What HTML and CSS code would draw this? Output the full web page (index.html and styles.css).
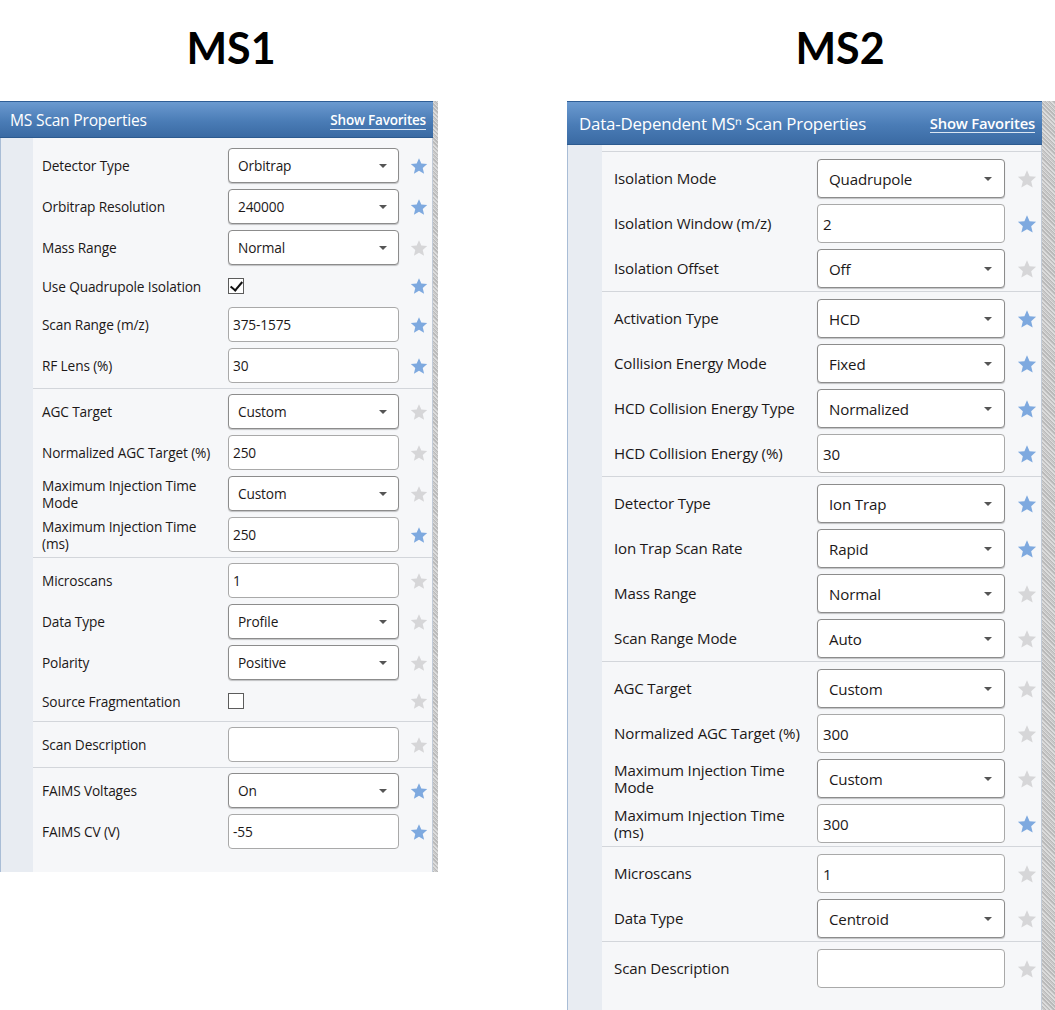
FILE: index.html
```html
<!DOCTYPE html>
<html>
<head>
<meta charset="utf-8">
<title>MS1 / MS2 Scan Properties</title>
<link rel="stylesheet" href="styles.css">
</head>
<body>
<svg class="defs" width="0" height="0" aria-hidden="true">
  <symbol id="star" viewBox="0 0 24 24"><path d="M12 1.5l3.1 7.2 7.8.7-5.9 5.2 1.8 7.7L12 18.2 5.2 22.3 7 14.6 1.1 9.4l7.8-.7z"/></symbol>
</svg>
<div class="page">
  <section class="col col--ms1">
    <h1 class="title">MS1</h1>
    <div class="panel">
      <div class="panel-main">
        <div class="panel-head"><span class="panel-title">MS Scan Properties</span><span class="fav-link">Show Favorites</span></div>
        <div class="panel-body">
          <div class="group group--first">
            <div class="row"><span class="label">Detector Type</span><div class="ctl select"><span class="val">Orbitrap</span><i class="caret"></i></div><svg class="star on"><use href="#star"/></svg></div>
            <div class="row"><span class="label">Orbitrap Resolution</span><div class="ctl select"><span class="val">240000</span><i class="caret"></i></div><svg class="star on"><use href="#star"/></svg></div>
            <div class="row"><span class="label">Mass Range</span><div class="ctl select"><span class="val">Normal</span><i class="caret"></i></div><svg class="star"><use href="#star"/></svg></div>
            <div class="row row--check"><span class="label">Use Quadrupole Isolation</span><div class="check-cell"><span class="checkbox checked"></span></div><svg class="star on"><use href="#star"/></svg></div>
            <div class="row"><span class="label">Scan Range (m/z)</span><div class="ctl input"><span class="val">375-1575</span></div><svg class="star on"><use href="#star"/></svg></div>
            <div class="row"><span class="label">RF Lens (%)</span><div class="ctl input"><span class="val">30</span></div><svg class="star on"><use href="#star"/></svg></div>
          </div>
          <div class="group">
            <div class="row"><span class="label">AGC Target</span><div class="ctl select"><span class="val">Custom</span><i class="caret"></i></div><svg class="star"><use href="#star"/></svg></div>
            <div class="row"><span class="label">Normalized AGC Target (%)</span><div class="ctl input"><span class="val">250</span></div><svg class="star"><use href="#star"/></svg></div>
            <div class="row"><span class="label">Maximum Injection Time Mode</span><div class="ctl select"><span class="val">Custom</span><i class="caret"></i></div><svg class="star"><use href="#star"/></svg></div>
            <div class="row"><span class="label">Maximum Injection Time (ms)</span><div class="ctl input"><span class="val">250</span></div><svg class="star on"><use href="#star"/></svg></div>
          </div>
          <div class="group">
            <div class="row"><span class="label">Microscans</span><div class="ctl input"><span class="val">1</span></div><svg class="star"><use href="#star"/></svg></div>
            <div class="row"><span class="label">Data Type</span><div class="ctl select"><span class="val">Profile</span><i class="caret"></i></div><svg class="star"><use href="#star"/></svg></div>
            <div class="row"><span class="label">Polarity</span><div class="ctl select"><span class="val">Positive</span><i class="caret"></i></div><svg class="star"><use href="#star"/></svg></div>
            <div class="row row--check"><span class="label">Source Fragmentation</span><div class="check-cell"><span class="checkbox"></span></div><svg class="star"><use href="#star"/></svg></div>
          </div>
          <div class="group">
            <div class="row"><span class="label">Scan Description</span><div class="ctl input"><span class="val"></span></div><svg class="star"><use href="#star"/></svg></div>
          </div>
          <div class="group group--last">
            <div class="row"><span class="label">FAIMS Voltages</span><div class="ctl select"><span class="val">On</span><i class="caret"></i></div><svg class="star on"><use href="#star"/></svg></div>
            <div class="row"><span class="label">FAIMS CV (V)</span><div class="ctl input"><span class="val">-55</span></div><svg class="star on"><use href="#star"/></svg></div>
          </div>
        </div>
      </div>
      <div class="strip"></div>
    </div>
  </section>

  <section class="col col--ms2">
    <h1 class="title">MS2</h1>
    <div class="panel panel--lg">
      <div class="panel-main">
        <div class="panel-head"><span class="panel-title">Data-Dependent MSⁿ Scan Properties</span><span class="fav-link">Show Favorites</span></div>
        <div class="panel-body">
          <div class="group">
            <div class="row"><span class="label">Isolation Mode</span><div class="ctl select"><span class="val">Quadrupole</span><i class="caret"></i></div><svg class="star"><use href="#star"/></svg></div>
            <div class="row"><span class="label">Isolation Window (m/z)</span><div class="ctl input"><span class="val">2</span></div><svg class="star on"><use href="#star"/></svg></div>
            <div class="row"><span class="label">Isolation Offset</span><div class="ctl select"><span class="val">Off</span><i class="caret"></i></div><svg class="star"><use href="#star"/></svg></div>
          </div>
          <div class="group">
            <div class="row"><span class="label">Activation Type</span><div class="ctl select"><span class="val">HCD</span><i class="caret"></i></div><svg class="star on"><use href="#star"/></svg></div>
            <div class="row"><span class="label">Collision Energy Mode</span><div class="ctl select"><span class="val">Fixed</span><i class="caret"></i></div><svg class="star on"><use href="#star"/></svg></div>
            <div class="row"><span class="label">HCD Collision Energy Type</span><div class="ctl select"><span class="val">Normalized</span><i class="caret"></i></div><svg class="star on"><use href="#star"/></svg></div>
            <div class="row"><span class="label">HCD Collision Energy (%)</span><div class="ctl input"><span class="val">30</span></div><svg class="star on"><use href="#star"/></svg></div>
          </div>
          <div class="group">
            <div class="row"><span class="label">Detector Type</span><div class="ctl select"><span class="val">Ion Trap</span><i class="caret"></i></div><svg class="star on"><use href="#star"/></svg></div>
            <div class="row"><span class="label">Ion Trap Scan Rate</span><div class="ctl select"><span class="val">Rapid</span><i class="caret"></i></div><svg class="star on"><use href="#star"/></svg></div>
            <div class="row"><span class="label">Mass Range</span><div class="ctl select"><span class="val">Normal</span><i class="caret"></i></div><svg class="star"><use href="#star"/></svg></div>
            <div class="row"><span class="label">Scan Range Mode</span><div class="ctl select"><span class="val">Auto</span><i class="caret"></i></div><svg class="star"><use href="#star"/></svg></div>
          </div>
          <div class="group">
            <div class="row"><span class="label">AGC Target</span><div class="ctl select"><span class="val">Custom</span><i class="caret"></i></div><svg class="star"><use href="#star"/></svg></div>
            <div class="row"><span class="label">Normalized AGC Target (%)</span><div class="ctl input"><span class="val">300</span></div><svg class="star"><use href="#star"/></svg></div>
            <div class="row"><span class="label">Maximum Injection Time Mode</span><div class="ctl select"><span class="val">Custom</span><i class="caret"></i></div><svg class="star"><use href="#star"/></svg></div>
            <div class="row"><span class="label">Maximum Injection Time (ms)</span><div class="ctl input"><span class="val">300</span></div><svg class="star on"><use href="#star"/></svg></div>
          </div>
          <div class="group">
            <div class="row"><span class="label">Microscans</span><div class="ctl input"><span class="val">1</span></div><svg class="star"><use href="#star"/></svg></div>
            <div class="row"><span class="label">Data Type</span><div class="ctl select"><span class="val">Centroid</span><i class="caret"></i></div><svg class="star"><use href="#star"/></svg></div>
          </div>
          <div class="group">
            <div class="row"><span class="label">Scan Description</span><div class="ctl input"><span class="val"></span></div><svg class="star"><use href="#star"/></svg></div>
          </div>
        </div>
      </div>
      <div class="strip"></div>
    </div>
  </section>
</div>
</body>
</html>
```

FILE: styles.css
```css
html, body {
  margin: 0;
  padding: 0;
  background: #ffffff;
}
body {
  width: 1055px;
  height: 1010px;
  overflow: hidden;
  font-family: "Open Sans", "Noto Sans", "DejaVu Sans", sans-serif;
  color: #1c1818;
}
.defs {
  position: absolute;
  width: 0;
  height: 0;
}
.page {
  display: flex;
  align-items: flex-start;
}
.col {
  display: flex;
  flex-direction: column;
}
.col--ms1 {
  width: 438px;
}
.col--ms2 {
  width: 488px;
  margin-left: 129px;
}
.title {
  margin: 0;
  height: 101px;
  box-sizing: border-box;
  display: flex;
  align-items: center;
  justify-content: center;
  font-family: Lato, "Open Sans", sans-serif;
  font-weight: 700;
  font-size: 43px;
  color: #000;
  padding-bottom: 6px;
}
.col--ms1 .title {
  padding-left: 24px;
}
.col--ms2 .title {
  padding-left: 58px;
}

/* panel */
.panel {
  display: flex;
  align-items: stretch;
}
.panel-main {
  flex: 1;
  display: flex;
  flex-direction: column;
  min-width: 0;
}
.strip {
  width: 5px;
  background: repeating-linear-gradient(45deg, #b9b9b9 0 1px, #dcdcdc 1px 2px, #c8c8c8 2px 3px);
}
.panel--lg .strip {
  width: 13px;
}
.panel-head {
  height: 37px;
  box-sizing: border-box;
  display: flex;
  align-items: center;
  justify-content: space-between;
  padding: 0 7px 0 10px;
  background: linear-gradient(#6b9ad0, #4a7cb6 55%, #3a6aa3);
  border-top: 1px solid #2f5e96;
  border-bottom: 1px solid #2c5a8f;
  color: #fff;
}
.panel-title {
  font-size: 15.6px;
  letter-spacing: -0.2px;
}
.fav-link {
  font-size: 13.5px;
  font-weight: 600;
  letter-spacing: -0.2px;
  border-bottom: 1px solid #dbe6f3;
  line-height: 16px;
  padding-bottom: 1px;
  margin-top: 2px;
}
.panel-body {
  padding: 5px 0 18px 33px;
  background: linear-gradient(90deg, #a9bdd6 0 1px, #e8ecf2 1px 33px, #f6f7f9 33px);
  border-right: 1px solid #c3ccd8;
}
.group {
  padding: 2px 0;
  border-top: 1px solid #d3d6db;
}
.group--first {
  border-top: 0;
}
.row {
  display: flex;
  align-items: center;
  height: 41px;
  padding-left: 9px;
  font-size: 13.7px;
}
.row--check {
  height: 36px;
}
.label {
  width: 186px;
  flex: none;
  box-sizing: border-box;
  padding-right: 8px;
  line-height: 17px;
  letter-spacing: -0.15px;
}
.ctl {
  width: 171px;
  height: 35px;
  flex: none;
  box-sizing: border-box;
  display: flex;
  align-items: center;
  background: #fff;
  border: 1px solid #a9a9a9;
  border-radius: 4px;
  letter-spacing: -0.15px;
}
.input {
  padding-left: 4px;
}
.select {
  padding: 0 11px 0 9px;
  border-color: #8c8c8c;
  box-shadow: 0 1px 1px rgba(0, 0, 0, 0.22);
}
.val {
  flex: 1;
}
.caret {
  width: 0;
  height: 0;
  border-left: 4px solid transparent;
  border-right: 4px solid transparent;
  border-top: 4px solid #555;
}
.check-cell {
  width: 171px;
  flex: none;
  display: flex;
  align-items: center;
}
.checkbox {
  width: 16px;
  height: 16px;
  box-sizing: border-box;
  border: 1px solid #5c5c5c;
  background: #fff;
  position: relative;
}
.checkbox.checked::after {
  content: "";
  position: absolute;
  left: 4px;
  top: 0px;
  width: 5px;
  height: 10px;
  border-right: 2px solid #111;
  border-bottom: 2px solid #111;
  transform: rotate(40deg);
}
.star {
  width: 18px;
  height: 18px;
  flex: none;
  margin-left: 11px;
  fill: #d6d6d8;
}
.star.on {
  fill: #7ea9df;
}

/* larger MS2 panel */
.panel--lg .panel-head {
  height: 44px;
  padding: 0 7px 0 12px;
}
.panel--lg .panel-title {
  font-size: 16.9px;
}
.panel--lg .fav-link {
  font-size: 14.8px;
}
.panel--lg .panel-body {
  padding: 6px 0 20px 35px;
  background: linear-gradient(90deg, #a9bdd6 0 1px, #e8ecf2 1px 35px, #f6f7f9 35px);
}
.panel--lg .group {
  padding: 4px 0 0;
  border-top: 1px solid #d3d6db;
}
.panel--lg .row {
  height: 45px;
  padding-left: 12px;
  font-size: 15.1px;
}
.panel--lg .label {
  width: 203px;
}
.panel--lg .ctl {
  width: 188px;
  height: 39px;
}
.panel--lg .input {
  padding-left: 5px;
}
.panel--lg .select {
  padding: 0 12px 0 11px;
}
.panel--lg .star {
  width: 20px;
  height: 20px;
  margin-left: 12px;
}
```
